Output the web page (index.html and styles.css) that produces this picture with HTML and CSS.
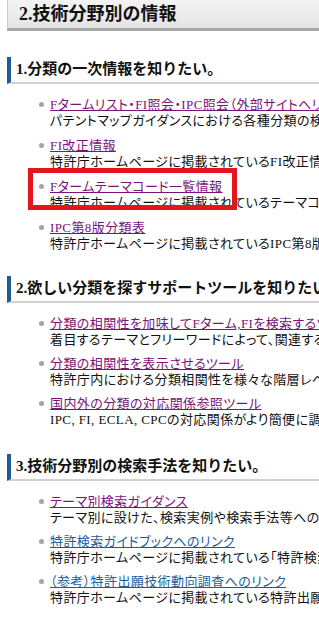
FILE: index.html
```html
<!DOCTYPE html>
<html lang="ja">
<head>
<meta charset="utf-8">
<title>技術分野別の情報</title>
<link rel="stylesheet" href="styles.css">
</head>
<body>
<div class="page">
  <div class="title">2.技術分野別の情報</div>

  <section class="sec sec1">
    <h2 class="head">1.分類の一次情報を知りたい。</h2>
    <ul class="items">
      <li><a class="v" href="#">Fタームリスト・FI照会・IPC照会（外部サイトへリンク）</a><span class="desc">パテントマップガイダンスにおける各種分類の検索が可能です。</span></li>
      <li><a class="v" href="#">FI改正情報</a><span class="desc">特許庁ホームページに掲載されているFI改正情報へのリンクです。</span></li>
      <li><a class="v" href="#">Fタームテーマコード一覧情報</a><span class="desc">特許庁ホームページに掲載されているテーマコード一覧へのリンクです。</span><span class="mark"></span></li>
      <li><a class="v" href="#">IPC第8版分類表</a><span class="desc">特許庁ホームページに掲載されているIPC第8版分類表へのリンクです。</span></li>
    </ul>
  </section>

  <section class="sec sec2">
    <h2 class="head">2.欲しい分類を探すサポートツールを知りたい。</h2>
    <ul class="items">
      <li><a class="v" href="#">分類の相関性を加味してFターム,FIを検索するツール</a><span class="desc">着目するテーマとフリーワードによって、関連する分類を検索できます。</span></li>
      <li><a class="v" href="#">分類の相関性を表示させるツール</a><span class="desc">特許庁内における分類相関性を様々な階層レベルで表示します。</span></li>
      <li><a class="v" href="#">国内外の分類の対応関係参照ツール</a><span class="desc">IPC, FI, ECLA, CPCの対応関係がより簡便に調べられます。</span></li>
    </ul>
  </section>

  <section class="sec sec3">
    <h2 class="head">3.技術分野別の検索手法を知りたい。</h2>
    <ul class="items">
      <li><a class="v" href="#">テーマ別検索ガイダンス</a><span class="desc">テーマ別に設けた、検索実例や検索手法等への案内です。</span></li>
      <li><a class="b" href="#">特許検索ガイドブックへのリンク</a><span class="desc">特許庁ホームページに掲載されている「特許検索ガイドブック」へのリンクです。</span></li>
      <li><a class="b" href="#">（参考）特許出願技術動向調査へのリンク</a><span class="desc">特許庁ホームページに掲載されている特許出願技術動向調査へのリンクです。</span></li>
    </ul>
  </section>
</div>
</body>
</html>
```

FILE: styles.css
```css
html, body {
  margin: 0;
  padding: 0;
  background: #ffffff;
}
body {
  width: 319px;
  overflow: hidden;
  font-family: "Liberation Serif", "Noto Sans CJK JP", serif;
  color: #111111;
}
.page {
  padding-left: 7px;
  width: 420px;
}
.title {
  height: 28px;
  line-height: 28px;
  padding-left: 11px;
  font-size: 18px;
  font-weight: bold;
  color: #111111;
  background: linear-gradient(#f3f3f3, #e4e4e4);
  border-left: 1px solid #c8c8c8;
  border-bottom: 3px solid #a9a9a9;
  white-space: nowrap;
}
.sec1 { margin-top: 26px; }
.sec2 { margin-top: 24px; }
.sec3 { margin-top: 26px; }
.head {
  margin: 0;
  height: 25px;
  line-height: 25px;
  padding-left: 5px;
  font-size: 15px;
  font-weight: bold;
  color: #111111;
  border-left: 4px solid #1f5b98;
  border-bottom: 2px solid #d2d2d2;
  white-space: nowrap;
}
.items {
  list-style: none;
  margin: 13px 0 0 0;
  padding: 0 0 0 43px;
}
.items li {
  position: relative;
  font-size: 13px;
  line-height: 16px;
  white-space: nowrap;
  font-feature-settings: "palt";
  letter-spacing: 0.4px;
}
.items li + li { margin-top: 8px; }
.sec1 .items li + li { margin-top: 9px; }
.items li::before {
  content: "";
  position: absolute;
  left: -11px;
  top: 5px;
  width: 5px;
  height: 5px;
  border-radius: 50%;
  background: #a3a3a3;
}
.items a, .desc {
  display: block;
}
.v { color: #7b1479; text-decoration: underline; }
.b { color: #1d5c9c; text-decoration: underline; }
.desc { color: #111111; }
.mark {
  position: absolute;
  left: -22px;
  top: -11px;
  width: 209px;
  height: 42px;
  box-sizing: border-box;
  border: 5px solid #e3161e;
}
```
